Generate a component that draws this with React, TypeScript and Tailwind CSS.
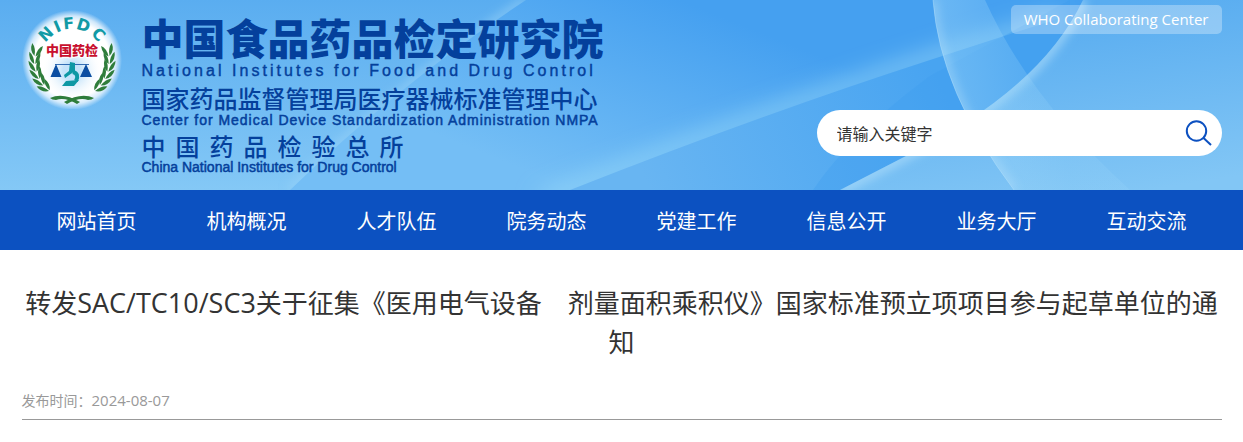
import { FormEvent } from "react";

const navItems = [
  "网站首页",
  "机构概况",
  "人才队伍",
  "院务动态",
  "党建工作",
  "信息公开",
  "业务大厅",
  "互动交流",
];

const emblemLetters = [
  { char: "N", angle: -44 },
  { char: "I", angle: -23 },
  { char: "F", angle: -5 },
  { char: "D", angle: 18 },
  { char: "C", angle: 45 },
];

// angle of every leaf pair on the left branch, 0 is straight left
const leafAngles = [15, 3, -9, -21, -33, -45];

const Branch = () => (
  <g fill="#2f7d3b">
    {leafAngles.map((angle) => (
      <g key={angle} transform={`rotate(${angle} 50 52) translate(13 52)`}>
        <path d="M-0.500 5 Q-7 1 -6 -7 Q-1 -3 -0.500 5Z" />
        <path d="M0.500 5 Q6 1 5 -7 Q0 -3 0.500 5Z" />
      </g>
    ))}
    <path d="M28 89 Q41 83 58 93 L55 95 Q43 88 34 91 Q30 91 28 89Z" />
  </g>
);

const Emblem = () => (
  <svg viewBox="0 0 100 100" className="size-[100px] shrink-0" aria-hidden="true">
    <defs>
      <radialGradient id="glow">
        <stop offset="0.76" stopColor="#fff" />
        <stop offset="0.88" stopColor="#fff" stopOpacity="0.7" />
        <stop offset="1" stopColor="#fff" stopOpacity="0" />
      </radialGradient>
      <radialGradient id="core">
        <stop offset="0.3" stopColor="#c4e3fa" />
        <stop offset="1" stopColor="#fff" stopOpacity="0" />
      </radialGradient>
    </defs>
    <circle cx="50" cy="51" r="50" fill="url(#glow)" />
    <circle cx="50" cy="62" r="30" fill="url(#core)" />
    {emblemLetters.map(({ char, angle }) => (
      <text
        key={char}
        x="50"
        y="20"
        textAnchor="middle"
        transform={`rotate(${angle} 50 52)`}
        className="fill-[#129aa5] font-['DejaVu_Sans'] text-base font-bold"
      >
        {char}
      </text>
    ))}
    <Branch />
    <g transform="matrix(-1 0 0 1 100 0)">
      <Branch />
    </g>
    <text
      x="50"
      y="46"
      textAnchor="middle"
      className="fill-[#c8102e] stroke-white stroke-2 font-['Noto_Sans_CJK_SC'] text-[13px] font-black [paint-order:stroke]"
    >
      中国药检
    </text>
    <path d="M33 55.500H67" stroke="#0b4ea2" strokeWidth="0.8" />
    <path d="M34 55L28.500 68H39.500ZM64 55L58 68H70Z" fill="#0b4ea2" />
    <g fill="#0d98a4">
      <path d="M48 53L53 54V62L43 69L42 66L47 62Z" />
      <path d="M51 63Q57.500 65 54 72" fill="none" stroke="#0d98a4" strokeWidth="4" />
      <path d="M44 72L57 71L52 77H40Z" />
    </g>
  </svg>
);

const Backdrop = () => (
  <svg
    viewBox="0 0 1243 190"
    preserveAspectRatio="none"
    className="absolute inset-0 size-full"
    aria-hidden="true"
  >
    <defs>
      <linearGradient id="sky" x1="0" y1="0" x2="0" y2="1">
        <stop offset="0" stopColor="#5aadf0" />
        <stop offset="1" stopColor="#84c8f6" />
      </linearGradient>
      <linearGradient id="mid" gradientUnits="userSpaceOnUse" x1="680" y1="0" x2="600" y2="200">
        <stop offset="0" stopColor="#45a0f0" />
        <stop offset="1" stopColor="#74bef5" />
      </linearGradient>
      <linearGradient id="low" gradientUnits="userSpaceOnUse" x1="930" y1="60" x2="650" y2="190">
        <stop offset="0" stopColor="#48a4f1" />
        <stop offset="1" stopColor="#68b5f2" />
      </linearGradient>
      <linearGradient id="swoosh" gradientUnits="userSpaceOnUse" x1="1120" y1="0" x2="1150" y2="190">
        <stop offset="0" stopColor="#58acf0" />
        <stop offset="1" stopColor="#82c6f5" />
      </linearGradient>
      <linearGradient id="veil" gradientUnits="userSpaceOnUse" x1="940" y1="50" x2="1040" y2="30">
        <stop offset="0" stopColor="#a5dcfa" stopOpacity="0.4" />
        <stop offset="1" stopColor="#a5dcfa" stopOpacity="0.15" />
      </linearGradient>
      <filter id="soft" filterUnits="userSpaceOnUse" x="0" y="-50" width="1243" height="300">
        <feGaussianBlur stdDeviation="5" />
      </filter>
      <filter id="wide" filterUnits="userSpaceOnUse" x="0" y="-50" width="1243" height="300">
        <feGaussianBlur stdDeviation="11" />
      </filter>
      <clipPath id="leftArea">
        <path d="M526 0Q400 83 290 190H0V0Z" />
      </clipPath>
      <clipPath id="swooshArea">
        <path d="M840 190L906 156Q1040 90 1083 0H1243V190Z" />
      </clipPath>
      <clipPath id="veilArea">
        <path d="M933 0Q940 92 1014 190H1243V0Z" />
      </clipPath>
    </defs>
    <path d="M0 0H1243V190H0Z" fill="url(#sky)" />
    <path d="M526 0Q400 83 290 190H1243V0Z" fill="url(#mid)" />
    <g clipPath="url(#leftArea)">
      <path d="M526 0Q400 83 290 190" fill="none" stroke="#9ad4f9" strokeWidth="8" strokeOpacity="0.6" filter="url(#soft)" />
    </g>
    <path d="M540 203L570 190Q760 115 930 60L1060 20" fill="none" stroke="#9bdcf8" strokeWidth="18" strokeOpacity="0.6" filter="url(#wide)" />
    <path d="M570 190Q760 115 930 60L1060 18V190Z" fill="url(#low)" />
    <path d="M813 190Q850 135 930 76L1070 0V190Z" fill="#3a9bef" fillOpacity="0.3" />
    <path d="M840 190L906 156Q1040 90 1083 0H1243V190Z" fill="url(#swoosh)" />
    <g clipPath="url(#swooshArea)">
      <path d="M840 190L906 156Q1040 90 1083 0" fill="none" stroke="#b8e3fc" strokeWidth="10" strokeOpacity="0.6" filter="url(#soft)" />
    </g>
    <path d="M933 0Q940 92 1014 190H1130Q1030 100 985 0Z" fill="url(#veil)" />
    <g clipPath="url(#veilArea)">
      <path d="M933 0Q940 92 1014 190" fill="none" stroke="#c0e6fc" strokeWidth="6" strokeOpacity="0.5" filter="url(#soft)" />
    </g>
    <path d="M933 0Q940 92 1014 190" fill="none" stroke="#b8e3fc" strokeOpacity="0.4" strokeWidth="1" />
  </svg>
);

const Logo = () => (
  <a href="#" className="flex items-start text-[#04409c]">
    <span className="pt-[9px]">
      <Emblem />
    </span>
    <span className="flex flex-col pt-5 pl-5 font-['Liberation_Sans','Noto_Sans_CJK_SC',sans-serif] whitespace-nowrap">
      <span className="text-[42px] leading-[42px] font-black">中国食品药品检定研究院</span>
      <span className="text-base leading-[18px] tracking-[0.19em] [-webkit-text-stroke:0.4px]">
        National Institutes for Food and Drug Control
      </span>
      <span className="mt-2 text-2xl leading-6 font-medium">国家药品监督管理局医疗器械标准管理中心</span>
      <span className="text-sm leading-4 tracking-[0.07em] [-webkit-text-stroke:0.5px]">
        Center for Medical Device Standardization Administration NMPA
      </span>
      <span className="mt-2 flex gap-[10px] text-2xl leading-6 font-medium">
        {[..."中国药品检验总所"].map((char) => (
          <span key={char}>{char}</span>
        ))}
      </span>
      <span className="text-sm leading-[14px] [-webkit-text-stroke:0.5px]">
        China National Institutes for Drug Control
      </span>
    </span>
  </a>
);

const SearchBox = () => (
  <form
    className="flex h-[46px] w-[405px] items-center rounded-full bg-white pr-2 pl-5"
    onSubmit={(e: FormEvent) => e.preventDefault()}
  >
    <input
      type="text"
      aria-label="请输入关键字"
      placeholder="请输入关键字"
      className="min-w-0 flex-1 bg-transparent pt-0.5 text-base text-[#333] outline-none placeholder:text-[#333]"
    />
    <button type="submit" aria-label="搜索" className="size-8">
      <svg viewBox="0 0 32 32" fill="none" stroke="#0c50c0" strokeWidth="2">
        <circle cx="14.5" cy="14" r="9.7" />
        <path d="M21 20.500L29 28" />
      </svg>
    </button>
  </form>
);

export default function App() {
  return (
    <div className="min-h-screen bg-white font-['Open_Sans','Noto_Sans_CJK_SC',sans-serif] text-[#333]">
      <header className="relative">
        <Backdrop />
        <div className="relative mx-auto flex h-[190px] max-w-[1200px] justify-between">
          <Logo />
          <div className="flex flex-col items-end justify-between pt-[5px] pb-[34px]">
            <a
              href="#"
              className="flex h-[29px] items-center rounded-[5px] bg-white/30 px-[13px] text-[15px] whitespace-nowrap text-white"
            >
              WHO Collaborating Center
            </a>
            <SearchBox />
          </div>
        </div>
      </header>

      <nav className="bg-[#0c51c1]">
        <ul className="mx-auto grid max-w-[1200px] grid-cols-8">
          {navItems.map((item) => (
            <li key={item}>
              <a href="#" className="block pt-1 text-center text-xl leading-[56px] text-white">
                {item}
              </a>
            </li>
          ))}
        </ul>
      </nav>

      <main className="mx-auto max-w-[1200px]">
        <h1 className="pt-[33px] text-center text-[26px] leading-[39px]">
          转发<span className="text-[27px]">SAC/TC10/SC3</span>
          关于征集《医用电气设备　剂量面积乘积仪》国家标准预立项项目参与起草单位的通知
        </h1>
        <p className="mt-7 border-b border-[#999] pb-2 text-sm leading-[21px] text-[#999]">
          发布时间：<time dateTime="2024-08-07" className="text-[15px]">2024-08-07</time>
        </p>
      </main>
    </div>
  );
}
